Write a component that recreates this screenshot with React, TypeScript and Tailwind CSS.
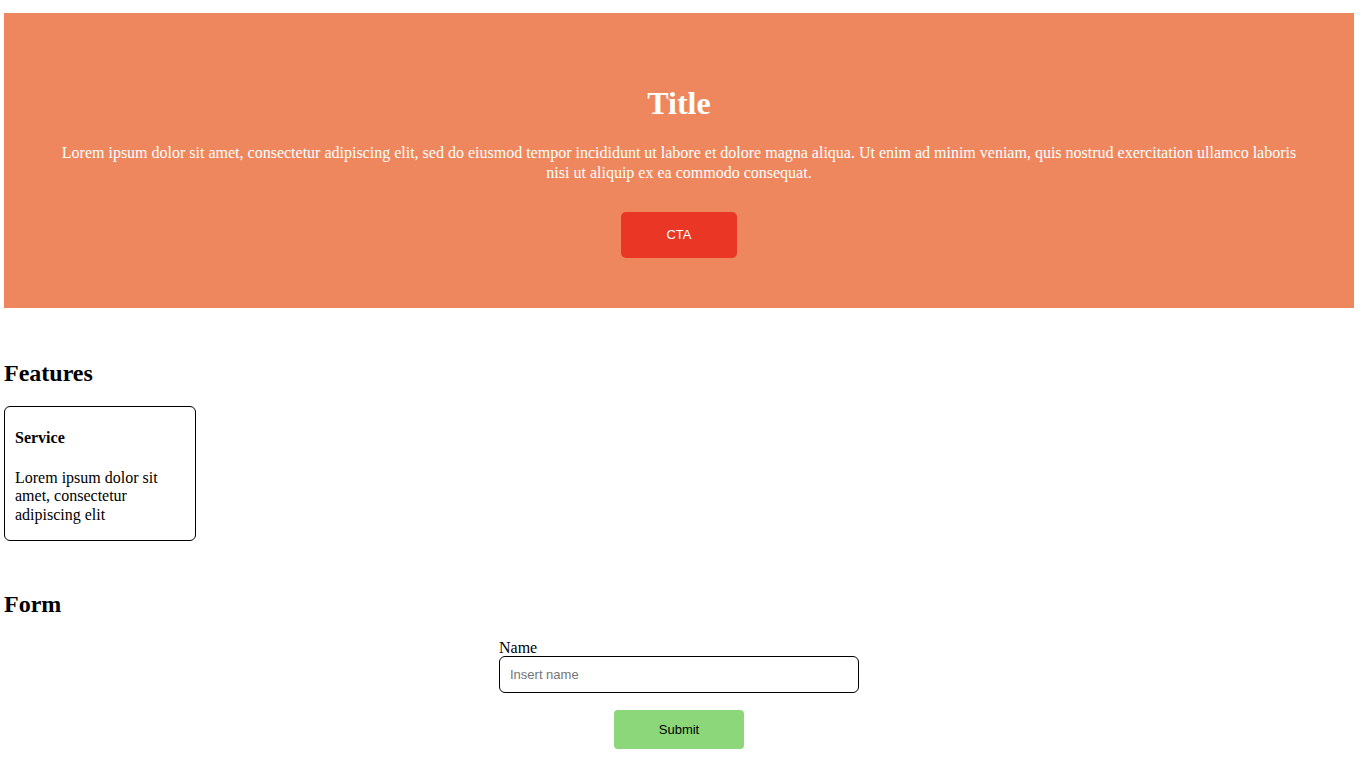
export default function App() {
  return (
    <div className="min-h-screen bg-white pl-[4px] pt-[13px] pb-[20px] font-['Liberation_Serif',serif] text-black">
      <section className="w-[1350px] bg-[#ef875e] px-[56px] pt-[72px] pb-[50px] text-center text-white">
        <h1 className="text-[32px] font-bold leading-[1.15]">Title</h1>
        <p className="mt-[21px] text-[16px] leading-5">
          Lorem ipsum dolor sit amet, consectetur adipiscing elit, sed do eiusmod tempor incididunt ut labore et dolore magna aliqua. Ut enim ad minim veniam, quis nostrud exercitation ullamco laboris nisi ut aliquip ex ea commodo consequat.
        </p>
        <button className="mt-[29px] h-[46px] w-[116px] rounded-[5px] bg-[#ea3625] font-['Liberation_Sans',sans-serif] text-[13px] text-white">
          CTA
        </button>
      </section>

      <section className="w-[1350px] pt-[52px]">
        <h2 className="text-[24px] font-bold leading-[1.15]">Features</h2>
        <div className="mt-[19px] w-[192px] rounded-[6px] border border-black px-[10px] pt-[22px] pb-[16px]">
          <h4 className="text-[16px] font-bold leading-[1.15]">Service</h4>
          <p className="mt-[21px] text-[16px] leading-[1.15]">Lorem ipsum dolor sit amet, consectetur adipiscing elit</p>
        </div>
      </section>

      <section className="w-[1350px] pt-[50px]">
        <h2 className="text-[24px] font-bold leading-[1.15]">Form</h2>
        <form className="mx-auto mt-[20px] flex w-[360px] flex-col items-center" onSubmit={(e) => e.preventDefault()}>
          <label className="w-full text-[16px] leading-[1.15]">
            Name
            <input
              type="text"
              placeholder="Insert name"
              className="-mt-[1px] block h-[37px] w-full rounded-[6px] border border-black px-[10px] font-['Liberation_Sans',sans-serif] text-[13px] outline-none placeholder:text-[#757575]"
            />
          </label>
          <button
            type="submit"
            className="mt-[17px] h-[39px] w-[130px] rounded-[4px] bg-[#8bd77a] font-['Liberation_Sans',sans-serif] text-[13px] text-black"
          >
            Submit
          </button>
        </form>
      </section>
    </div>
  )
}
